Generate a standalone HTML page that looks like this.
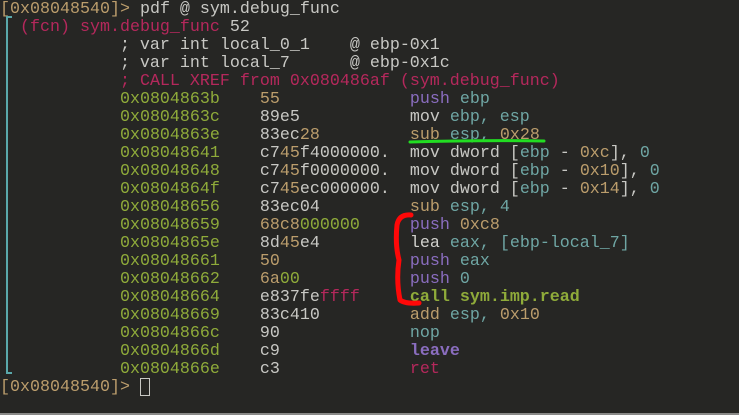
<!DOCTYPE html>
<html><head><meta charset="utf-8"><style>
html,body{margin:0;padding:0;background:#262624;width:739px;height:415px;overflow:hidden}
pre{position:absolute;left:0;top:1px;margin:0;font-family:"Liberation Mono",monospace;font-size:16.67px;line-height:18px;color:#c8c8c4;white-space:pre}
.g{color:#8fab3a}.t{color:#bb9d6c}.c{color:#6fa6a4}.p{color:#8a6dbf}.r{color:#b5285c}.w{color:#d0d0cc}
.b{font-weight:bold}
</style></head><body>
<pre><span class="t">[0x08048540]&gt;</span> pdf @ sym.debug_func
  <span class="r">(fcn) sym.debug_func</span> 52
            ; var int local_0_1    @ ebp-0x1
            ; var int local_7      @ ebp-0x1c
            <span class="r">; CALL XREF from 0x080486af (sym.debug_func)</span>
            <span class="g">0x0804863b</span>    <span class="t">55</span>             <span class="p">push</span> <span class="c">ebp</span>
            <span class="g">0x0804863c</span>    89e5           mov <span class="c">ebp, esp</span>
            <span class="g">0x0804863e</span>    83ec<span class="t">28</span>         <span class="t">sub</span> <span class="c">esp,</span> <span class="t">0x28</span>
            <span class="g">0x08048641</span>    c7<span class="t">45</span>f4000000.  mov dword [<span class="c">ebp</span> - <span class="t">0xc</span>], <span class="c">0</span>
            <span class="g">0x08048648</span>    c7<span class="t">45</span>f0000000.  mov dword [<span class="c">ebp</span> - <span class="t">0x10</span>], <span class="c">0</span>
            <span class="g">0x0804864f</span>    c7<span class="t">45</span>ec000000.  mov dword [<span class="c">ebp</span> - <span class="t">0x14</span>], <span class="c">0</span>
            <span class="g">0x08048656</span>    83ec04         <span class="t">sub</span> <span class="c">esp, 4</span>
            <span class="g">0x08048659</span>    <span class="t">68c8</span><span class="g">000000</span>     <span class="p">push</span> <span class="t">0xc8</span>
            <span class="g">0x0804865e</span>    8d<span class="t">45</span>e4         <span class="w">lea</span> <span class="c">eax, [ebp-local_7]</span>
            <span class="g">0x08048661</span>    <span class="t">50</span>             <span class="p">push</span> <span class="c">eax</span>
            <span class="g">0x08048662</span>    <span class="t">6a</span><span class="g">00</span>           <span class="p">push</span> <span class="c">0</span>
            <span class="g">0x08048664</span>    e837fe<span class="r">ffff</span>     <span class="g b">call sym.imp.read</span>
            <span class="g">0x08048669</span>    83c410         <span class="t">add</span> <span class="c">esp,</span> <span class="t">0x10</span>
            <span class="g">0x0804866c</span>    90             <span class="c">nop</span>
            <span class="g">0x0804866d</span>    c9             <span class="p b">leave</span>
            <span class="g">0x0804866e</span>    c3             <span class="r">ret</span>
<span class="t">[0x08048540]&gt;</span> </pre>
<div style="position:absolute;left:6px;top:16px;width:2px;height:358px;background:#5aa8aa"></div>
<div style="position:absolute;left:6px;top:16px;width:6px;height:2px;background:#5aa8aa"></div>
<div style="position:absolute;left:6px;top:372px;width:6px;height:2px;background:#5aa8aa"></div>
<div style="position:absolute;left:140px;top:378px;width:10px;height:18px;border:1px solid #c8c8c4;box-sizing:border-box"></div>
<div style="position:absolute;left:0;top:413px;width:739px;height:2px;background:#8a8a88"></div>
<svg width="739" height="415" style="position:absolute;left:0;top:0" viewBox="0 0 739 415">
<path d="M410 142 Q480 140 544 141" stroke="#22dd22" stroke-width="3" fill="none" stroke-linecap="round"/>
<path d="M411 215 Q399 214 397 225 Q395 245 399 260 Q396 280 400 300 Q405 304 419 303" stroke="#ff0808" stroke-width="5" fill="none" stroke-linecap="round" stroke-linejoin="round"/>
</svg>
</body></html>
